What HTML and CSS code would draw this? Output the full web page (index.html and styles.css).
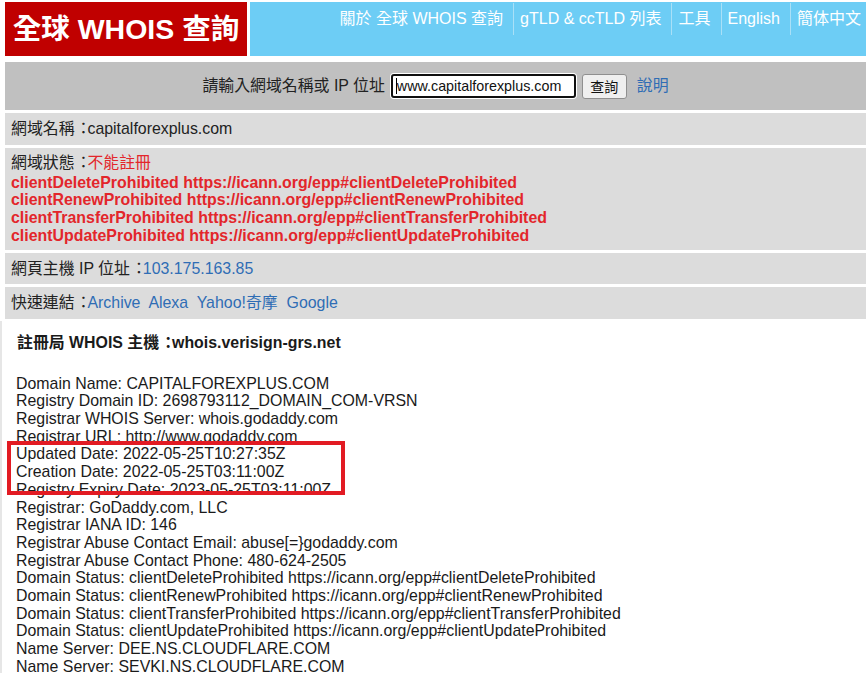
FILE: index.html
```html
<!DOCTYPE html>
<html lang="zh-Hant">
<head>
<meta charset="utf-8">
<title>全球 WHOIS 查詢</title>
<link rel="stylesheet" href="styles.css">
</head>
<body>
<div class="page">
  <header class="header">
    <div class="logo">全球 WHOIS 查詢</div>
    <nav class="nav">
      <a class="nav-item first" href="#">關於 全球 WHOIS 查詢</a>
      <a class="nav-item" href="#">gTLD &amp; ccTLD 列表</a>
      <a class="nav-item" href="#">工具</a>
      <a class="nav-item" href="#">English</a>
      <a class="nav-item last" href="#">簡体中文</a>
    </nav>
  </header>

  <form class="search">
    <span class="search-label">請輸入網域名稱或 IP 位址</span>
    <span class="search-input"><span class="caret"></span>www.capitalforexplus.com</span>
    <button class="search-btn" type="button">查詢</button>
    <a class="link help" href="#">說明</a>
  </form>

  <div class="row">網域名稱<span class="colon">：</span>capitalforexplus.com</div>
  <div class="row row-status">
    <div class="status-label">網域狀態<span class="colon">：</span><span class="red">不能註冊</span></div>
    <div class="status">clientDeleteProhibited https://icann.org/epp#clientDeleteProhibited</div>
    <div class="status">clientRenewProhibited https://icann.org/epp#clientRenewProhibited</div>
    <div class="status">clientTransferProhibited https://icann.org/epp#clientTransferProhibited</div>
    <div class="status">clientUpdateProhibited https://icann.org/epp#clientUpdateProhibited</div>
  </div>
  <div class="row">網頁主機 IP 位址<span class="colon">：</span><a class="link" href="#">103.175.163.85</a></div>
  <div class="row">快速連結<span class="colon">：</span><a class="link" href="#">Archive</a>&nbsp; <a class="link" href="#">Alexa</a>&nbsp; <a class="link" href="#">Yahoo!奇摩</a>&nbsp; <a class="link" href="#">Google</a></div>

  <section class="whois">
    <div class="whois-title">註冊局 WHOIS 主機<span class="colon">：</span>whois.verisign-grs.net</div>
    <div class="whois-body">
      <div>Domain Name: CAPITALFOREXPLUS.COM</div>
      <div>Registry Domain ID: 2698793112_DOMAIN_COM-VRSN</div>
      <div>Registrar WHOIS Server: whois.godaddy.com</div>
      <div>Registrar URL: http://www.godaddy.com</div>
      <div class="highlight">
        <div>Updated Date: 2022-05-25T10:27:35Z</div>
        <div>Creation Date: 2022-05-25T03:11:00Z</div>
        <div>Registry Expiry Date: 2023-05-25T03:11:00Z</div>
      </div>
      <div>Registrar: GoDaddy.com, LLC</div>
      <div>Registrar IANA ID: 146</div>
      <div>Registrar Abuse Contact Email: abuse[=}godaddy.com</div>
      <div>Registrar Abuse Contact Phone: 480-624-2505</div>
      <div>Domain Status: clientDeleteProhibited https://icann.org/epp#clientDeleteProhibited</div>
      <div>Domain Status: clientRenewProhibited https://icann.org/epp#clientRenewProhibited</div>
      <div>Domain Status: clientTransferProhibited https://icann.org/epp#clientTransferProhibited</div>
      <div>Domain Status: clientUpdateProhibited https://icann.org/epp#clientUpdateProhibited</div>
      <div>Name Server: DEE.NS.CLOUDFLARE.COM</div>
      <div>Name Server: SEVKI.NS.CLOUDFLARE.COM</div>
    </div>
  </section>
</div>
</body>
</html>
```

FILE: styles.css
```css
html, body {
  margin: 0;
  padding: 0;
  background: #ffffff;
}

body {
  font-family: "Liberation Sans", Arial, "Noto Sans CJK TC", sans-serif;
  font-size: 15.9px;
  line-height: 17.7px;
  color: #222222;
  overflow: hidden;
}

.page {
  padding: 2px 0 0 5px;
}

a {
  text-decoration: none;
}

.header {
  display: flex;
  gap: 3px;
  height: 54px;
}

.logo {
  width: 242px;
  flex: 0 0 242px;
  background: #c00000;
  color: #ffffff;
  font-weight: bold;
  font-size: 28.5px;
  line-height: 34px;
  display: flex;
  align-items: center;
  justify-content: center;
}

.nav {
  flex: 1;
  background: #6dcdf5;
  display: flex;
  justify-content: flex-end;
  align-items: flex-start;
  padding-top: 1px;
}

.nav-item {
  color: #ffffff;
  font-size: 16px;
  line-height: 32px;
  height: 32px;
  padding: 0 10px 0 6px;
  border-left: 1px solid #a9e0f7;
}

.nav-item.first {
  border-left: none;
}

.nav-item.last {
  padding-right: 5px;
}

.search {
  margin: 6px 0 0 0;
  height: 48px;
  background: #c0c0c0;
  display: flex;
  align-items: center;
  justify-content: center;
}

.search-label {
  color: #222222;
  margin-right: 6px;
}

.search-input {
  box-sizing: border-box;
  width: 185px;
  height: 24px;
  border: 2px solid #101010;
  border-radius: 3px;
  background: #ffffff;
  font-size: 14.3px;
  line-height: 20px;
  padding-left: 3px;
  color: #111111;
  display: flex;
  align-items: center;
  white-space: nowrap;
  overflow: hidden;
  box-shadow: 0 0 0 1px #ffffff;
}

.caret {
  display: inline-block;
  width: 1px;
  height: 16px;
  background: #000000;
}

.search-btn {
  margin-left: 6px;
  width: 45px;
  height: 25px;
  font-family: "Liberation Sans", Arial, "Noto Sans CJK TC", sans-serif;
  font-size: 14px;
  background: #efefef;
  border: 1px solid #8f8f8f;
  border-radius: 3px;
  color: #111111;
  padding: 0;
}

.help {
  margin-left: 10px;
}

.link {
  color: #2f6db5;
}

.colon {
  letter-spacing: -4px;
  margin-left: 1px;
}

.row {
  background: #dcdcdc;
  margin-top: 3px;
  padding: 7px 6px;
  color: #222222;
}

.row-status {
  padding: 4px 6px 5px;
}

.status-label {
  line-height: 22px;
}

.red {
  color: #e3262b;
}

.status {
  color: #e3262b;
  font-weight: bold;
}

.whois {
  margin: 2px 0 0 -5px;
  border-left: 2px solid #e6e6e6;
  padding: 13px 0 0 14px;
  color: #1a1a1a;
}

.whois-title {
  font-weight: bold;
  padding-left: 1px;
}

.whois-body {
  margin-top: 23px;
}

.highlight {
  position: relative;
}

.highlight::after {
  content: "";
  position: absolute;
  left: -9px;
  top: -4px;
  width: 338px;
  height: 54px;
  box-sizing: border-box;
  border: 4px solid #e21b23;
  pointer-events: none;
}
```
